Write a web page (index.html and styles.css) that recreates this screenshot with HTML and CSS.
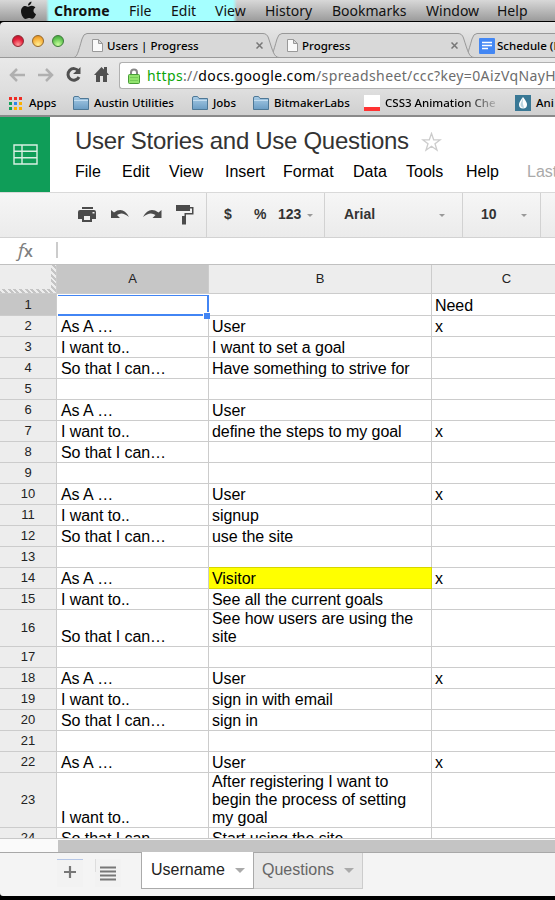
FILE: index.html
```html
<!DOCTYPE html>
<html lang="en">
<head>
<meta charset="utf-8">
<title>User Stories and Use Questions</title>
<link rel="stylesheet" href="styles.css">
</head>
<body>
<nav class="macbar">
  <div class="apple"><svg width="17" height="19" viewBox="0 0 17 19"><path d="M11.5 0.5C11.7 2.5 10 4.6 8 4.6C7.800 2.700 9.500.8 11.500.500ZM8.300 5.700C9.200 5.700 10 4.800 11.800 4.800C13.300 4.800 14.600 5.500 15.400 6.600C12.600 8.200 13 12 16 13.200C15.200 15.500 13.700 17.800 12 17.800C10.700 17.800 10.200 17.100 8.800 17.100C7.400 17.100 6.800 17.900 5.600 17.900C3.300 17.900 1 13.700 1 10.300C1 6.800 3.200 4.900 5.300 4.900C6.700 4.900 7.600 5.700 8.300 5.700Z" fill="#151515"/></svg></div>
  <span class="m-chrome">Chrome</span><span class="m-file">File</span><span class="m-edit">Edit</span><span class="m-view">View</span><span class="m-history">History</span><span class="m-book">Bookmarks</span><span class="m-window">Window</span><span>Help</span>
</nav>
<header class="tabstrip">
  <div class="lights"><i class="red"></i><i class="amber"></i><i class="green"></i></div>
  <div class="tab t1">
    <svg class="shape" width="206" height="25"><path d="M0 24.500C3 24 4 20 8 6Q9.500.500 13 .500H189Q193 .500 194.500 5C199 19 200 24 205 24.500"/></svg>
    <svg class="page" width="11" height="13"><path d="M.500.500H6.500L10.500 4.500V12.500H.500ZM6.500.500V4.500H10.500"/></svg>
    <b>Users | Progress</b>
    <svg class="close" width="7" height="7"><path d="M.500.500L6.500 6.500M6.500.500L.500 6.500"/></svg>
  </div>
  <div class="tab t2">
    <svg class="shape" width="206" height="25"><path d="M0 24.500C3 24 4 20 8 6Q9.500.500 13 .500H189Q193 .500 194.500 5C199 19 200 24 205 24.500"/></svg>
    <svg class="page" width="11" height="13"><path d="M.500.500H6.500L10.500 4.500V12.500H.500ZM6.500.500V4.500H10.500"/></svg>
    <b>Progress</b>
    <svg class="close" width="7" height="7"><path d="M.500.500L6.500 6.500M6.500.500L.500 6.500"/></svg>
  </div>
  <div class="tab t3">
    <svg class="shape" width="206" height="25"><path d="M0 24.500C3 24 4 20 8 6Q9.500.500 13 .500H189Q193 .500 194.500 5C199 19 200 24 205 24.500"/></svg>
    <svg class="doc" width="16" height="16"><rect width="16" height="16" rx="1" fill="#4387f4"/><path d="M3 4.500H13M3 7.500H13M3 10.500H9" stroke="#fff" stroke-width="1.500"/></svg>
    <b>Schedule (R</b>
  </div>
</header>
<div class="navbar">
  <svg class="nav-icons" width="119" height="32">
    <g fill="none" stroke="#b0b0b0" stroke-width="2.500"><path d="M25 17H11M17 11L11 17L17 23"/><path d="M38 17H52M46 11L52 17L46 23"/></g>
    <path d="M78.500 13A5.800 5.800 0 1 0 79 19" fill="none" stroke="#505050" stroke-width="3"/><path d="M80.500 9V16H73Z" fill="#505050"/>
    <path d="M94 17L101.500 9L104 11.500V9H107V14.500L109 17H107V24H103V18H100V24H96V17Z" fill="#505050"/>
  </svg>
  <div class="omnibox">
    <svg width="12" height="16"><path d="M3 8V4.500Q3 1.500 6 1.500T9 4.500V8" fill="none" stroke="#888" stroke-width="2"/><rect x=".5" y="6.500" width="11" height="9" rx="1" fill="#91e36d" stroke="#479c37"/><path d="M2 9.500H10M2 12.500H10" stroke="#74ca57"/></svg>
    <span class="url"><span class="secure">https</span>://<span class="host">docs.google.com</span>/spreadsheet/ccc?key=0AizVqNayH</span>
  </div>
</div>
<div class="bookmarks">
  <div class="bm apps"><svg width="13" height="13"><path fill="#ee2c24" d="M0 0h3v3H0zM5 0h3v3H5zM10 0h3v3h-3z"/><path fill="#14a05a" d="M0 5h3v3H0zM0 10h3v3H0z"/><path fill="#2f86ec" d="M5 5h3v3H5z"/><path fill="#fbb000" d="M10 5h3v3h-3zM5 10h3v3H5zM10 10h3v3h-3z"/></svg><span>Apps</span></div>
  <div class="bm austin"><svg class="folder" width="16" height="14"><use href="#folder"/></svg><span>Austin Utilities</span></div>
  <div class="bm jobs"><svg class="folder" width="16" height="14"><use href="#folder"/></svg><span>Jobs</span></div>
  <div class="bm labs"><svg class="folder" width="16" height="14"><use href="#folder"/></svg><span>BitmakerLabs</span></div>
  <div class="bm css"><i class="cssicon"></i><span class="fade">CSS3 Animation Che</span></div>
  <div class="bm ani"><svg width="16" height="16"><rect width="16" height="16" fill="#397895"/><path d="M8 2Q12 7 12 9.500A4 4 0 0 1 4 9.500Q4 7 8 2Z" fill="#fff"/><path d="M8 3Q7 8 9 13Q5 12 5.500 9Z" fill="#b9d4df"/></svg><span>Ani</span></div>
  <svg width="0" height="0"><defs><linearGradient id="fg" x2="0" y2="1"><stop stop-color="#a9cce6"/><stop offset="1" stop-color="#6b9dc4"/></linearGradient><g id="folder"><path d="M.500 13.500V2Q.500.500 2 .500H5.500L7 2.500H15.500V13.500Z" fill="url(#fg)" stroke="#4e7896"/><path d="M1 4.500H15" stroke="#c3ddf0"/></g></defs></svg>
</div>
<section class="dochead">
  <div class="logo"><svg width="25" height="21"><path d="M1 1H24V20H1ZM1 7.300H24M1 13.700H24M9 1V20" fill="none" stroke="#d9efe2" stroke-width="1.400"/></svg></div>
  <div class="docinfo">
    <div class="title"><h1>User Stories and Use Questions</h1><svg width="21" height="20"><path d="M10.500 1.500L12.700 7.800H19.300L14 11.800L16 18.200L10.500 14.300L5 18.200L7 11.800L1.700 7.800H8.300Z" fill="none" stroke="#ccc" stroke-width="1.300"/></svg></div>
    <div class="menus"><span class="d1">File</span><span class="d2">Edit</span><span class="d3">View</span><span class="d4">Insert</span><span class="d5">Format</span><span class="d6">Data</span><span class="d7">Tools</span><span class="d8">Help</span><span class="last">Last</span></div>
  </div>
</section>
<div class="tools">
  <div class="group g1"><svg width="206" height="44" fill="#4b4b4b">
    <path d="M82 14H93V16H82ZM80 17H94Q96 17 96 19V26H92V29H82V26H78V19Q78 17 80 17ZM84 23V27H90V23ZM92.500 19V20.500H94.500V19Z" fill-rule="evenodd"/>
    <path d="M111 17L114 19.500Q123 13 129 24Q122 18 117 22L120 25H111Z"/>
    <path d="M161.500 17L158.500 19.500Q149 13 143 24Q150 18 155.500 22L152.500 25H161.500Z"/>
    <path d="M176 12H190V18H176ZM190 14H193.500V21.500H186V23H184.500V20H192V15.500H190ZM182 23H186V31.500H182Z"/>
  </svg></div>
  <div class="group g2"><b class="dollar">$</b><b class="percent">%</b><b class="num">123</b><i class="arrow"></i></div>
  <div class="group g3"><b>Arial</b><i class="arrow"></i></div>
  <div class="group g4"><b>10</b><i class="arrow"></i></div>
  <div class="group g5"></div>
</div>
<div class="formula"><span class="fx"><i>f</i>x</span><span class="caret"></span></div>
<main class="grid">
  <div class="r head"><div class="n corner"></div><div class="a sel">A</div><div class="b">B</div><div class="c">C</div></div>
  <div class="r first"><div class="n sel">1</div><div class="a active"><i class="handle"></i></div><div class="b"></div><div class="c">Need</div></div>
  <div class="r"><div class="n">2</div><div class="a">As A …</div><div class="b">User</div><div class="c">x</div></div>
  <div class="r"><div class="n">3</div><div class="a">I want to..</div><div class="b">I want to set a goal</div><div class="c"></div></div>
  <div class="r"><div class="n">4</div><div class="a">So that I can…</div><div class="b">Have something to strive for</div><div class="c"></div></div>
  <div class="r"><div class="n">5</div><div class="a"></div><div class="b"></div><div class="c"></div></div>
  <div class="r"><div class="n">6</div><div class="a">As A …</div><div class="b">User</div><div class="c"></div></div>
  <div class="r"><div class="n">7</div><div class="a">I want to..</div><div class="b">define the steps to my goal</div><div class="c">x</div></div>
  <div class="r"><div class="n">8</div><div class="a">So that I can…</div><div class="b"></div><div class="c"></div></div>
  <div class="r"><div class="n">9</div><div class="a"></div><div class="b"></div><div class="c"></div></div>
  <div class="r"><div class="n">10</div><div class="a">As A …</div><div class="b">User</div><div class="c">x</div></div>
  <div class="r"><div class="n">11</div><div class="a">I want to..</div><div class="b">signup</div><div class="c"></div></div>
  <div class="r"><div class="n">12</div><div class="a">So that I can…</div><div class="b">use the site</div><div class="c"></div></div>
  <div class="r"><div class="n">13</div><div class="a"></div><div class="b"></div><div class="c"></div></div>
  <div class="r"><div class="n">14</div><div class="a">As A …</div><div class="b hl">Visitor</div><div class="c">x</div></div>
  <div class="r"><div class="n">15</div><div class="a">I want to..</div><div class="b">See all the current goals</div><div class="c"></div></div>
  <div class="r two"><div class="n">16</div><div class="a">So that I can…</div><div class="b">See how users are using the<br>site</div><div class="c"></div></div>
  <div class="r"><div class="n">17</div><div class="a"></div><div class="b"></div><div class="c"></div></div>
  <div class="r"><div class="n">18</div><div class="a">As A …</div><div class="b">User</div><div class="c">x</div></div>
  <div class="r"><div class="n">19</div><div class="a">I want to..</div><div class="b">sign in with email</div><div class="c"></div></div>
  <div class="r"><div class="n">20</div><div class="a">So that I can…</div><div class="b">sign in</div><div class="c"></div></div>
  <div class="r"><div class="n">21</div><div class="a"></div><div class="b"></div><div class="c"></div></div>
  <div class="r"><div class="n">22</div><div class="a">As A …</div><div class="b">User</div><div class="c">x</div></div>
  <div class="r three"><div class="n">23</div><div class="a">I want to..</div><div class="b">After registering I want to<br>begin the process of setting<br>my goal</div><div class="c"></div></div>
  <div class="r"><div class="n">24</div><div class="a">So that I can</div><div class="b">Start using the site</div><div class="c"></div></div>
</main>
<div class="scroll"><div class="track"></div></div>
<footer class="sheets">
  <div class="btn add"><svg width="14" height="14"><path d="M7 1V13M1 7H13" stroke="#777" stroke-width="2.200"/></svg></div>
  <div class="btn list"><svg width="16" height="15"><path d="M0 1.500H16M0 5.500H16M0 9.500H16M0 13.500H16" stroke="#777" stroke-width="2"/></svg></div>
  <div class="sheet on"><span>Username</span><i></i></div>
  <div class="sheet"><span>Questions</span><i></i></div>
</footer>
</body>
</html>
```
FILE: styles.css
```css
* { box-sizing: border-box; }
body { margin: 0; width: 555px; height: 900px; overflow: hidden; background: #000; font-family: "Liberation Sans", Arial, sans-serif; }
svg { display: block; flex: none; }

.macbar { height: 22px; display: flex; align-items: center; border-bottom: 1px solid #000; background: linear-gradient(90deg, transparent 46px, #a5ffff 49px, #a5ffff 233px, transparent 237px), linear-gradient(#d8d8d8, #9b9b9b); font: 14px/21px "Noto Sans", sans-serif; color: #111; white-space: nowrap; }
.macbar span { flex: none; }
.apple { width: 54px; padding-left: 20px; }
.m-chrome { width: 75px; font-weight: 700; letter-spacing: .15px; }
.m-file { width: 42px; }
.m-edit { width: 44px; }
.m-view { width: 50px; }
.m-history { width: 67px; }
.m-book { width: 94px; }
.m-window { width: 71px; }

.tabstrip { height: 36px; display: flex; overflow: hidden; border-bottom: 1px solid #999; border-top-left-radius: 4px; background: linear-gradient(#e9e9e9, #cfcfcf); }
.lights { width: 74px; flex: none; display: flex; gap: 8px; padding: 13px 0 0 12px; }
.lights i { width: 12px; height: 12px; border-radius: 50%; border: 1px solid #555; }
.lights .red { background: radial-gradient(circle at 50% 85%, #ff9a9a, #e4203b 55%, #b41428); border-color: #8b2a35; }
.lights .amber { background: radial-gradient(circle at 50% 85%, #ffee93, #f7b13b 60%, #d98218); border-color: #95682a; }
.lights .green { background: radial-gradient(circle at 50% 85%, #c9ff9c, #62c552 60%, #3c9a3b); border-color: #3d7a3a; }
.tab { position: relative; flex: none; width: 195px; height: 25px; margin-top: 11px; padding-left: 18px; display: flex; align-items: center; font: 11.500px/24px "Noto Sans", sans-serif; color: #000; }
.t1 { z-index: 3; }
.t2 { z-index: 2; }
.t3 { z-index: 1; }
.tab b { font-weight: 500; white-space: nowrap; z-index: 1; margin-left: 4px; flex: 1; }
.shape { position: absolute; left: 0; top: 0; fill: #d8d8d8; stroke: #989898; }
.page { position: relative; fill: #fafafa; stroke: #999; }
.doc { position: relative; margin-left: -3px; }
.tab .doc + b { margin-left: 2px; }
.close { position: relative; margin-right: 6px; stroke: #777; stroke-width: 1.500; fill: none; }

.navbar { height: 33px; display: flex; background: linear-gradient(#e9e9e9, #dedede); }
.omnibox { flex: 1; height: 27px; margin-top: 4px; padding-left: 8px; display: flex; align-items: center; gap: 7px; overflow: hidden; border: 1px solid #b0b0b0; border-right: 0; border-radius: 3px 0 0 3px; background: #fff; }
.url { font: 14px/24px "Noto Sans", sans-serif; color: #6c6c6c; white-space: nowrap; letter-spacing: .38px; }
.secure { color: #09a509; }
.host { color: #000; }

.bookmarks { height: 26px; display: flex; border-bottom: 2px solid #8a8a8a; background: linear-gradient(#dedede, #d0d0d0); font: 500 11.500px/24px "Noto Sans", sans-serif; color: #000; overflow: hidden; }
.bm { display: flex; align-items: center; flex: none; white-space: nowrap; gap: 5px; }
.apps { width: 73px; padding-left: 9px; gap: 7px; }
.austin { width: 119px; }
.jobs { width: 61px; }
.labs { width: 111px; }
.css { width: 151px; }
.cssicon { width: 16px; height: 16px; background: #fff; border-bottom: 4px solid #f33; }
.fade { width: 113px; -webkit-mask-image: linear-gradient(90deg, #000 80px, transparent 116px); mask-image: linear-gradient(90deg, #000 80px, transparent 116px); }

.dochead { height: 76px; display: flex; background: #fff; border-bottom: 1px solid #d9d9d9; }
.logo { flex: none; width: 50px; height: 75px; background: #0f9d58; padding: 27px 0 0 13px; }
.docinfo { padding-left: 25px; flex: none; }
.title { display: flex; height: 40px; padding-top: 10px; }
h1 { margin: 0; width: 346px; font-size: 24px; line-height: 28px; font-weight: 400; color: #333; white-space: nowrap; letter-spacing: -.3px; }
.title svg { margin-top: 5px; }
.menus { display: flex; font-size: 16px; line-height: 30px; color: #000; white-space: nowrap; }
.d1 { width: 47px; }
.d2 { width: 47px; }
.d3 { width: 56px; }
.d4 { width: 58px; }
.d5 { width: 70px; }
.d6 { width: 53px; }
.d7 { width: 60px; }
.d8 { width: 61px; }
.last { color: #aaa; }

.tools { height: 45px; display: flex; background: linear-gradient(#f6f6f6, #ebebeb); border-bottom: 1px solid #d2d2d2; }
.group { display: flex; align-items: center; flex: none; border-right: 1px solid #d2d2d2; font-size: 14px; color: #333; }
.group b { line-height: 42px; height: 44px; }
.g1 { width: 207px; }
.g2 { width: 118px; padding-left: 17px; }
.g3 { width: 138px; padding-left: 19px; }
.g4 { width: 78px; padding-left: 18px; }
.g5 { border: 0; }
.dollar { width: 30px; }
.percent { width: 24px; }
.num { width: 29px; }
.g3 b { width: 95px; }
.g4 b { width: 40px; }
.arrow { border: 3.500px solid transparent; border-top-color: #999; border-bottom: 0; }

.formula { height: 27px; display: flex; background: #fff; border-bottom: 1px solid #c0c0c0; }
.fx { width: 56px; padding-left: 18px; font: 600 16px/24px "Open Sans", sans-serif; color: #808080; }
.fx i { font-size: 19px; font-weight: 400; }
.caret { width: 2px; height: 16px; margin-top: 4px; background: #ccc; }

.grid { height: 574px; overflow: hidden; background: #fff; border-bottom: 1px solid #c8c8c8; }
.r { display: grid; grid-template-columns: 57px 152px 223px 150px; height: 21px; font-size: 16px; line-height: 18px; letter-spacing: -.06px; color: #000; }
.two { height: 37px; }
.three { height: 55px; }
.r > div { border-right: 1px solid #ccc; border-bottom: 1px solid #ccc; padding-left: 3px; display: flex; align-items: flex-end; white-space: nowrap; }
.r > .a { padding-left: 4px; }
.r > .n { background: #ededed; padding: 0; align-items: center; justify-content: center; font-size: 13px; color: #222; }
.head { height: 29px; }
.head > div, .head > .a { background: #ededed; align-items: center; justify-content: center; padding: 0; font-size: 13px; color: #222; }
.first { height: 22px; }
.r > .sel { background: #c6c6c6; }
.head > .corner { background: linear-gradient(#ededed, #ededed) 0 0 / 51px 24px no-repeat, repeating-linear-gradient(45deg, #c4c4c4 0 2px, #ededed 2px 4px); }
.r > .active { position: relative; margin: 1px 0 0 1px; border-right: 0; border-bottom: 0; box-shadow: inset 0 1px #4285f4, inset -2px -2px #4285f4; }
.handle { position: absolute; right: -1px; bottom: -3px; width: 7px; height: 7px; background: #4285f4; border: 1px solid #fff; border-width: 1px 0 0 1px; }
.r > .hl { background: #ff0; border-color: #d5d500; box-shadow: 0 -1px #d5d500; }

.scroll { height: 14px; padding: 1px 0 0 58px; background: #fafafa; border-bottom: 1px solid #a8a8a8; }
.track { height: 12px; background: #c4c4c4; }
.sheets { height: 43px; display: flex; background: #f4f4f4; border-bottom-left-radius: 3px; }
.btn { display: flex; flex: none; align-items: center; justify-content: center; height: 28px; margin-top: 6px; background: #f2f2f2; }
.add { width: 26px; margin-left: 57px; padding-bottom: 3px; border-top: 1px solid #b5c6e6; }
.list { width: 26px; margin-left: 12px; padding-right: 5px; }
.list::before { content: ""; width: 1px; height: 13px; background: #ddd; align-self: flex-start; margin-right: 4px; }
.sheet { height: 36px; width: 109px; padding-left: 8px; display: flex; flex: none; align-items: center; font-size: 16px; color: #666; background: #e8e8e8; border: 1px solid #ccc; border-top: 0; border-left: 0; }
.sheet span { flex: 1; line-height: 34px; height: 36px; }
.sheet i { border: 5px solid transparent; border-top-color: #aaa; border-bottom: 0; margin-right: 8px; }
.sheet.on { width: 113px; height: 37px; margin-left: 20px; margin-top: -1px; padding-left: 9px; background: #fff; color: #222; border: 1px solid #aaa; border-top: 0; }
.sheet.on span { line-height: 36px; }
```
